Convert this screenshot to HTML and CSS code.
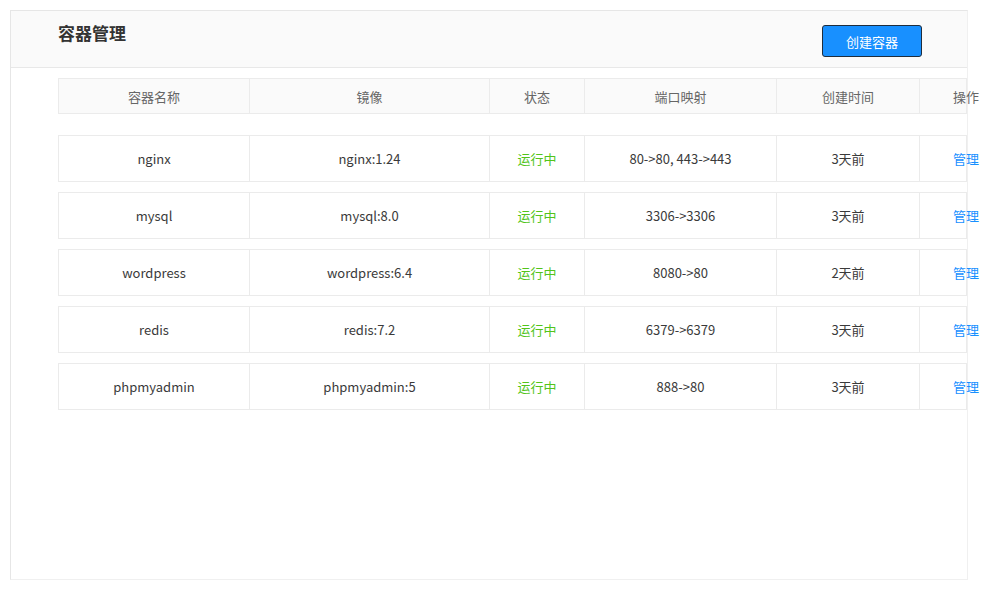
FILE: index.html
```html
<!DOCTYPE html>
<html lang="zh-CN">
<head>
    <meta charset="UTF-8">
    <meta name="viewport" content="width=device-width, initial-scale=1.0">
    <title>容器管理</title>
    <link rel="stylesheet" href="styles.css">
</head>
<body>
    <div class="panel">
        <div class="panel-header">
            <h1>容器管理</h1>
            <button class="btn-primary">创建容器</button>
        </div>

        <div class="container-list">
            <div class="row head">
                <div class="cell">容器名称</div>
                <div class="cell">镜像</div>
                <div class="cell">状态</div>
                <div class="cell">端口映射</div>
                <div class="cell">创建时间</div>
                <div class="cell action">操作</div>
            </div>

            <div class="rows">
                <div class="row">
                    <div class="cell">nginx</div>
                    <div class="cell">nginx:1.24</div>
                    <div class="cell status">运行中</div>
                    <div class="cell">80-&gt;80, 443-&gt;443</div>
                    <div class="cell">3天前</div>
                    <div class="cell action"><a href="#">管理</a></div>
                </div>
                <div class="row">
                    <div class="cell">mysql</div>
                    <div class="cell">mysql:8.0</div>
                    <div class="cell status">运行中</div>
                    <div class="cell">3306-&gt;3306</div>
                    <div class="cell">3天前</div>
                    <div class="cell action"><a href="#">管理</a></div>
                </div>
                <div class="row">
                    <div class="cell">wordpress</div>
                    <div class="cell">wordpress:6.4</div>
                    <div class="cell status">运行中</div>
                    <div class="cell">8080-&gt;80</div>
                    <div class="cell">2天前</div>
                    <div class="cell action"><a href="#">管理</a></div>
                </div>
                <div class="row">
                    <div class="cell">redis</div>
                    <div class="cell">redis:7.2</div>
                    <div class="cell status">运行中</div>
                    <div class="cell">6379-&gt;6379</div>
                    <div class="cell">3天前</div>
                    <div class="cell action"><a href="#">管理</a></div>
                </div>
                <div class="row">
                    <div class="cell">phpmyadmin</div>
                    <div class="cell">phpmyadmin:5</div>
                    <div class="cell status">运行中</div>
                    <div class="cell">888-&gt;80</div>
                    <div class="cell">3天前</div>
                    <div class="cell action"><a href="#">管理</a></div>
                </div>
            </div>
        </div>
    </div>
</body>
</html>
```

FILE: styles.css
```css
body {
    margin: 0;
    padding: 10px 0 0 10px;
    background: #fff;
    font-family: "Noto Sans CJK SC", "Noto Sans", sans-serif;
    font-size: 13px;
    color: #3a3a3a;
}
.panel {
    width: 956px;
    height: 568px;
    border: 1px solid #e6e6e6;
    border-right-color: #f0f0f0;
    border-bottom-color: #f0f0f0;
}
.panel-header {
    display: flex;
    justify-content: space-between;
    align-items: flex-start;
    height: 57px;
    padding: 10px 45px 0 47px;
    box-sizing: border-box;
    background: #fafafa;
    border-bottom: 1px solid #e8e8e8;
}
.panel-header h1 {
    margin: 0;
    font-size: 17px;
    line-height: 24px;
    font-weight: bold;
    color: #333;
}
.btn-primary {
    width: 100px;
    height: 32px;
    margin-top: 4px;
    background: #1890ff;
    color: #fff;
    border: 1px solid #1f2d3d;
    border-radius: 3px;
    font-family: inherit;
    font-size: 13px;
    cursor: pointer;
}
.container-list {
    padding: 10px 0 0 47px;
}
.rows {
    display: flex;
    flex-direction: column;
    gap: 10px;
    margin-top: 21px;
}
.row {
    display: grid;
    grid-template-columns: 191px 240px 95px 192px 143px 46px;
    width: 909px;
    height: 47px;
    box-sizing: border-box;
    border: 1px solid #ebebeb;
    background: #fff;
}
.row.head {
    height: 36px;
    background: #fafafa;
    color: #666;
}
.cell {
    display: flex;
    align-items: center;
    justify-content: center;
    border-right: 1px solid #ebebeb;
    white-space: nowrap;
}
.cell.action {
    justify-content: flex-start;
    padding-left: 33px;
    border-right: none;
}
.status {
    color: #52c41a;
}
.action a {
    color: #1890ff;
    text-decoration: none;
}
```
